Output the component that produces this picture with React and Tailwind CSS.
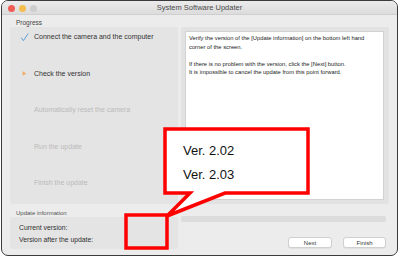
import React from 'react';

const STEPS = [
  { label: 'Connect the camera and the computer', state: 'done' },
  { label: 'Check the version', state: 'current' },
  { label: 'Automatically reset the camera', state: 'todo' },
  { label: 'Run the update', state: 'todo' },
  { label: 'Finish the update', state: 'todo' },
];

const StepIcon = ({ state }) => {
  if (state === 'done') {
    return (
      <svg width="9" height="9" viewBox="0 0 10 10" className="shrink-0">
        <path d="M1.5 5.5 L3.8 8.5 L8.8 1" fill="none" stroke="#5b9fd6" strokeWidth="1.1" strokeLinecap="round" />
      </svg>
    );
  }
  if (state === 'current') {
    return (
      <svg width="9" height="9" viewBox="0 0 10 10" className="shrink-0">
        <path d="M3 2.5 L7 5 L3 7.5 Z" fill="#f3ab62" />
      </svg>
    );
  }
  return <span className="w-[9px] shrink-0" />;
};

const App = () => {
  return (
    <div className="relative w-[400px] h-[258px] bg-white" style={{ fontFamily: '"Liberation Sans", Arial, sans-serif' }}>
      <div className="ml-[1px] w-[397px] h-[256px] border-[1.5px] border-[#3b3b3b] rounded-[7px] overflow-hidden bg-[#ececec] flex flex-col">
        {/* title bar */}
        <div className="relative h-[14px] shrink-0 bg-gradient-to-b from-[#ebebeb] to-[#dcdcdc] border-b border-[#cfcfcf] flex items-center justify-center">
          <div className="absolute left-[6px] top-[4px] flex gap-[4px]">
            <span className="w-[7px] h-[7px] rounded-full bg-[#ee5e56]" />
            <span className="w-[7px] h-[7px] rounded-full bg-[#f4be4f]" />
            <span className="w-[7px] h-[7px] rounded-full bg-[#cdcdcd]" />
          </div>
          <span className="text-[7.5px] text-[#4a4a4a] leading-none">System Software Updater</span>
        </div>

        {/* body */}
        <div className="flex-1 flex flex-col px-[8px]">
          <div className="text-[6.5px] text-[#444] leading-none pl-[6px] pt-[5px] h-[12px]">Progress</div>
          <div className="flex gap-[3px] h-[177px]">
            <div className="w-[168px] bg-[#e4e4e4] rounded-[2px] pt-[6px] pl-[10px]">
              {STEPS.map((s) => (
                <div key={s.label} className="h-[36.5px] flex items-start gap-[5px]">
                  <div className="h-[8px] flex items-center"><StepIcon state={s.state} /></div>
                  <span className={`text-[7px] leading-[8px] ${s.state === 'todo' ? 'text-[#bababa]' : 'text-[#333]'}`}>{s.label}</span>
                </div>
              ))}
            </div>
            <div className="flex-1 bg-[#e2e2e2] rounded-[2px] p-[4px] pr-[5px]">
              <div className="h-full bg-white border border-[#d2d2d2] px-[3px] pt-[2px] text-[5.8px] leading-[8.5px] text-[#222]">
                <p>Verify the version of the [Update information] on the bottom left hand corner of the screen.</p>
                <p className="mt-[8.5px]">If there is no problem with the version, click the [Next] button.</p>
                <p>It is impossible to cancel the update from this point forward.</p>
              </div>
            </div>
          </div>

          <div className="flex gap-[3px] mt-[6px]">
            <div className="w-[168px] flex flex-col">
              <div className="text-[6px] text-[#555] leading-none pl-[6px] h-[7px]">Update information</div>
              <div className="h-[32px] bg-[#e4e4e4] rounded-[2px] pl-[9px] pt-[5px] text-[6.8px] text-[#2f2f2f] leading-[12px]">
                <div>Current version:</div>
                <div>Version after the update:</div>
              </div>
            </div>
            <div className="flex-1 flex flex-col pr-[3px]">
              <div className="mt-[6px] h-[6px] bg-[#dcdcdc] rounded-[2px]" />
              <div className="mt-[15px] flex justify-end gap-[11px]">
                <button className="w-[44px] h-[11px] bg-white border border-[#d0d0d0] rounded-[3px] text-[6px] text-[#333] leading-none shadow-[0_0.5px_0.5px_rgba(0,0,0,0.1)]">Next</button>
                <button className="w-[43px] h-[11px] bg-white border border-[#d0d0d0] rounded-[3px] text-[6px] text-[#333] leading-none shadow-[0_0.5px_0.5px_rgba(0,0,0,0.1)]">Finish</button>
              </div>
            </div>
          </div>
        </div>
      </div>

      {/* callout overlay */}
      <svg className="absolute left-0 top-0 pointer-events-none" width="400" height="258" viewBox="0 0 400 258">
        <path d="M165 129 L308 129 L308 193 L225 193 L167 216 L190 193 L165 193 Z" fill="#fff" stroke="#ff0000" strokeWidth="3.5" strokeLinejoin="miter" />
        <rect x="126" y="215" width="41" height="33" fill="none" stroke="#ff0000" strokeWidth="3.5" />
      </svg>
      <div className="absolute left-[183px] top-[139px] text-[13px] leading-[24px] text-[#111]">
        <div>Ver. 2.02</div>
        <div>Ver. 2.03</div>
      </div>
    </div>
  );
};

export default App;
